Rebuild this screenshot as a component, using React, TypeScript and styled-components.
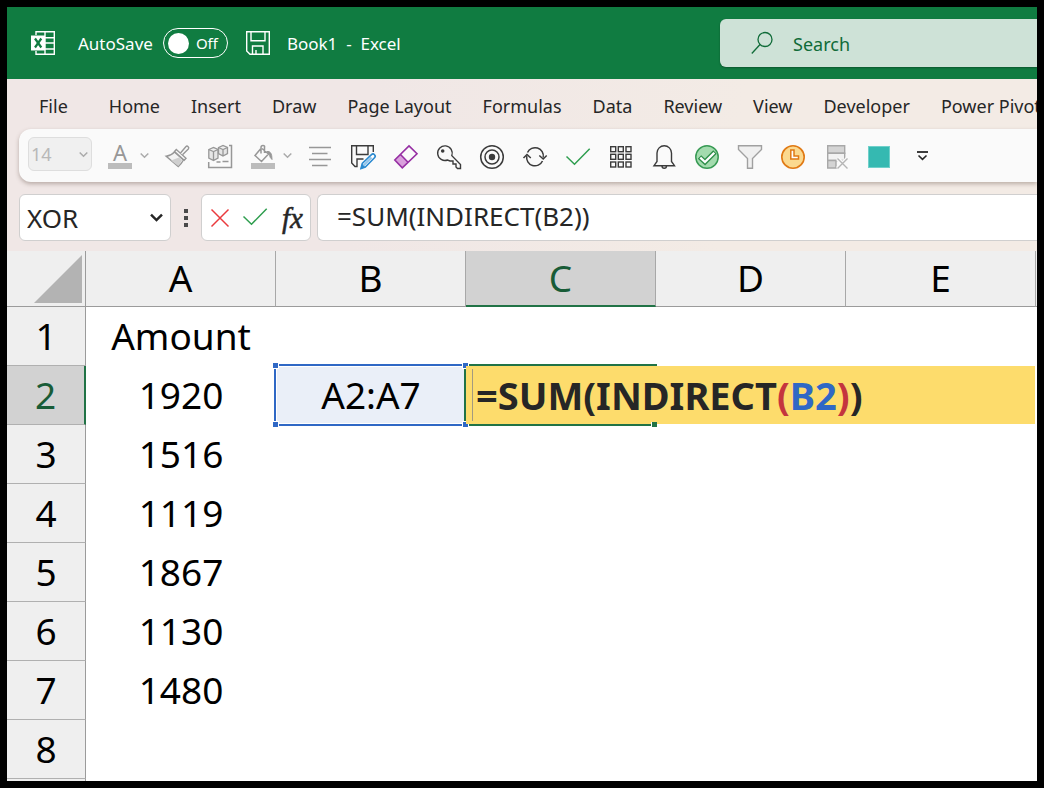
import React from "react";
import styled, { createGlobalStyle, css } from "styled-components";

const green = "#107c41";
const gridGreen = "#217346";
const rangeBlue = "#2f68c5";

const GlobalStyle = createGlobalStyle`
  *, *::before, *::after { box-sizing: border-box; }
  body {
    margin: 0;
    background: #000;
    font-family: "Noto Sans", "Open Sans", sans-serif;
  }
  button, input, select { font: inherit; color: inherit; }
`;

const Frame = styled.div`
  display: flex;
  flex-direction: column;
  height: 100vh;
  border: 7px solid #000;
  background: #fff;
  overflow: hidden;
`;

/* Title bar */

const TitleBar = styled.header`
  display: grid;
  grid-template-columns: minmax(0, 9fr) minmax(0, 4fr);
  align-items: center;
  flex: none;
  height: 72px;
  background: ${green};
  color: #fff;
  font-size: 17px;
`;

const TitleGroup = styled.div`
  display: flex;
  align-items: center;
  padding-left: 24px;
  white-space: pre;
`;

const AutoSaveLabel = styled.label`
  margin: 0 10px 0 23px;
`;

const Toggle = styled.label`
  display: flex;
  align-items: center;
  gap: 7px;
  width: 65px;
  height: 30px;
  padding-left: 4px;
  border: 1px solid #fff;
  border-radius: 15px;
  font-size: 15px;
`;

const Knob = styled.input`
  appearance: none;
  width: 21px;
  height: 21px;
  margin: 0;
  border-radius: 50%;
  background: #fff;
`;

const PlainButton = styled.button`
  display: flex;
  align-items: center;
  justify-content: center;
  padding: 0;
  border: 0;
  background: none;
`;

const SaveButton = styled(PlainButton)`
  margin: 0 17px 0 18px;
`;

const SearchBox = styled.label`
  display: flex;
  align-items: center;
  gap: 20px;
  height: 48px;
  padding-left: 31px;
  border-radius: 6px 0 0 6px;
  background: #cee2d7;
  color: #0f6b38;
  font-size: 18px;
  box-shadow: 0 1px 2px rgba(0, 0, 0, 0.3);
`;

const SearchInput = styled.input`
  flex: 1;
  min-width: 0;
  padding: 2px 0 0;
  border: 0;
  outline: 0;
  background: none;
  &::placeholder { color: inherit; opacity: 1; }
`;

/* Ribbon */

const Ribbon = styled.div`
  flex: none;
  background: linear-gradient(100deg, #f0e7e6 35%, #f3ebe5 70%);
`;

const Tabs = styled.nav`
  display: flex;
  align-items: center;
  gap: 31px;
  height: 50px;
  padding: 4px 0 0 32px;
  overflow: hidden;
`;

const Tab = styled.button`
  flex: none;
  padding: 0;
  border: 0;
  background: none;
  color: #262626;
  font-size: 18px;
  line-height: 26px;
  white-space: nowrap;
  &:first-child { margin-right: 10px; }
`;

const Toolbar = styled.div`
  display: flex;
  align-items: flex-start;
  height: 53px;
  margin-left: 12px;
  padding: 8px 0 0 9px;
  border-radius: 12px 0 0 12px;
  background: #fafafa;
  box-shadow: 0 2px 4px rgba(80, 60, 50, 0.35);
`;

const SelectWrap = styled.div<{ $small?: boolean }>`
  display: flex;
  align-items: center;
  flex: none;
  ${(p) =>
    p.$small
      ? css`
          width: 64px;
          height: 34px;
          margin-right: 7px;
          padding: 0 3px 0 2px;
          border: 1px solid #dedede;
          border-radius: 6px;
          background: #f0f0f0;
          color: #b8b8b8;
          font-size: 18px;
        `
      : css`
          width: 152px;
          height: 47px;
          padding: 0 7px;
          border: 1px solid #d0cfcf;
          border-radius: 6px;
          background: #fff;
          color: #262626;
          font-size: 26px;
        `}
`;

const Select = styled.select`
  appearance: none;
  flex: 1;
  min-width: 0;
  padding: 0;
  border: 0;
  outline: 0;
  background: none;
  opacity: 1;
`;

const Tool = styled(PlainButton)<{ $split?: boolean }>`
  flex: none;
  height: 41px;
  padding: 0 ${(p) => (p.$split ? 6 : 9)}px 0 9px;
`;

const ToolMenu = styled(PlainButton)`
  flex: none;
  height: 41px;
  padding: 0 7px 4px 1px;
`;

const FormulaRow = styled.div`
  display: flex;
  align-items: center;
  margin-left: 12px;
  padding: 12px 0 10px;
`;

const Dots = styled.span`
  display: grid;
  gap: 3px;
  margin: 0 13px;
  i { width: 4px; height: 4px; background: #4a4a4a; }
`;

const EntryButtons = styled.div`
  display: flex;
  align-items: center;
  gap: 14px;
  height: 47px;
  padding: 0 7px 0 9px;
  border: 1px solid #d0cfcf;
  border-radius: 6px;
  background: #fff;
`;

const FxButton = styled(PlainButton)`
  width: 21px;
  color: #262626;
  font: italic 29px/30px "Liberation Serif", serif;
  -webkit-text-stroke: 0.5px #262626;
`;

const FormulaInput = styled.input`
  flex: 1;
  min-width: 0;
  height: 47px;
  margin-left: 6px;
  padding: 0 0 3px 19px;
  border: 1px solid #d0cfcf;
  border-right: 0;
  border-radius: 6px 0 0 6px;
  outline: 0;
  background: #fff;
  color: #262626;
  font-size: 26px;
`;

/* Sheet */

const Sheet = styled.table`
  width: 100%;
  table-layout: fixed;
  border-collapse: separate;
  border-spacing: 0;
  color: #000;
  font-size: 37px;
  line-height: 50px;
`;

const Col = styled.col<{ $w?: number }>`
  width: ${(p) => (p.$w ? `${p.$w}px` : "auto")};
`;

const Corner = styled.td`
  height: 56px;
  padding: 0;
  border-right: 1px solid #9b9b9b;
  border-bottom: 1px solid #9b9b9b;
  background: #efefef;
  vertical-align: middle;
  svg { display: block; margin: 0 3px 0 auto; }
`;

const ColHead = styled.th<{ $active?: boolean }>`
  height: 56px;
  padding: 0 0 ${(p) => (p.$active ? 0 : 1)}px;
  border-right: 1px solid #a8a8a8;
  border-bottom: ${(p) => (p.$active ? `2px solid ${gridGreen}` : "1px solid #9b9b9b")};
  background: ${(p) => (p.$active ? "#d2d2d2" : "#efefef")};
  color: ${(p) => (p.$active ? "#185c37" : "inherit")};
  font-weight: 400;
  &:last-child { border-right: 0; }
`;

const RowHead = styled.th<{ $active?: boolean }>`
  height: 59px;
  padding: 0;
  border-right: ${(p) => (p.$active ? `2px solid ${gridGreen}` : "1px solid #9b9b9b")};
  border-bottom: 1px solid #b0b0b0;
  background: ${(p) => (p.$active ? "#d2d2d2" : "#efefef")};
  color: ${(p) => (p.$active ? "#185c37" : "inherit")};
  font-weight: 400;
`;

const Cell = styled.td`
  position: relative;
  height: 59px;
  padding: 0 0 2px;
  text-align: center;
`;

const RangeBox = styled.div`
  position: absolute;
  inset: -2px 0 -1px -2px;
  display: flex;
  align-items: center;
  justify-content: center;
  border: solid ${rangeBlue};
  border-width: 2px 0 2px 2px;
  background: #eaeff8;
  box-shadow: inset 1px 1px 0 #fff, inset 0 -1px 0 #fff;
  z-index: 1;
`;

const Handle = styled.span<{ $right?: boolean; $bottom?: boolean }>`
  position: absolute;
  width: 7px;
  height: 7px;
  border: 1px solid #fff;
  background: ${rangeBlue};
  ${(p) => (p.$right ? "right: -3px;" : "left: -4px;")}
  ${(p) => (p.$bottom ? "bottom: -4px;" : "top: -4px;")}
`;

const ActiveBox = styled.div`
  position: absolute;
  inset: -2px -1px -1px -2px;
  z-index: 2;
  border: 2px solid ${gridGreen};
  border-right: 0;
  clip-path: polygon(5px 0, 100% 0, 100% 120%, 5px 120%, 5px calc(100% - 5px), 0 calc(100% - 5px), 0 5px, 5px 5px);
  &::after {
    content: "";
    position: absolute;
    right: -1px;
    bottom: -3px;
    width: 7px;
    height: 5px;
    border-left: 1px solid #fff;
    background: ${gridGreen};
  }
`;

const Editor = styled.div`
  position: absolute;
  top: 0;
  left: 0;
  z-index: 1;
  width: 569px;
  height: 58px;
  padding: 3px 6px;
  background: #fddc6c;
`;

const Formula = styled.div`
  height: 52px;
  padding-left: 3px;
  border-left: 1px solid #a39a80;
  color: #262626;
  font-size: 38px;
  font-weight: 700;
  line-height: 52px;
  text-align: left;
  white-space: nowrap;
`;

const Token = styled.span<{ $color: string }>`
  color: ${(p) => p.$color};
`;

/* Icons */

const Svg = styled.svg.attrs({ "aria-hidden": true })`
  display: block;
  flex: none;
  fill: none;
  overflow: visible;
`;

const Icon = ({ children }: { children: React.ReactNode }) => (
  <Svg width="25" height="25" viewBox="0 0 25 25">
    {children}
  </Svg>
);

const Chevron = ({ color, w, stroke }: { color: string; w: number; stroke: number }) => (
  <Svg width={w} height={w} viewBox="0 0 9 9">
    <path d="M.7 2.5 4.5 6.3 8.3 2.5" stroke={color} strokeWidth={stroke} />
  </Svg>
);

const grey = "#979797";
const dark = "#3b3b3b";

const FontColorIcon = (
  <Icon>
    <text x="12" y="16" textAnchor="middle" fontSize="22" fill={grey}>A</text>
    <path d="M0 18h24v6H0z" fill="#bcbcbc" />
  </Icon>
);

const BrushIcon = (
  <Icon>
    <path d="M9.5 7C7 9.700 4 11 1.200 11.300L13.300 21.500C15.500 19.500 17.300 17.300 18.500 15Z" fill="#f3f3f3" stroke={grey} strokeWidth="1.400" />
    <path d="M6 15.500 14 12.500 17 15.500 13.300 21Z" fill="#cfcfcf" />
    <path d="M11.300 4.500 21 13.300 19.200 15.300 9.500 6.500Z" fill="#fafafa" stroke={grey} strokeWidth="1.400" />
    <path d="M15.500 8 20.800 1.700a1.700 1.700 0 0 1 2.500 2.300L17.500 9.800" fill="#fafafa" stroke={grey} strokeWidth="1.400" />
  </Icon>
);

const CubesIcon = (
  <Icon>
    <path d="M21 .5h2.500V22.500H.700V17M8.500 17h4M14.500 16.500h6" stroke={grey} strokeWidth="1.500" />
    <g fill="#e6e6e6" stroke={grey} strokeWidth="1.300">
      <path d="M.8 4.500 5.500 2.500 10 4.500V13L5.500 15.500.8 13ZM.8 4.500 5.500 6.500 10 4.500M5.500 6.500v9" />
      <path d="M10.500 2.500 15 .5 19.500 2.500V8.500L15 11 10.500 8.500ZM10.500 2.500 15 4.500 19.500 2.500M15 4.500V11" />
    </g>
  </Icon>
);

const BucketIcon = (
  <Icon>
    <path d="M9.500 4 4 10.500 10.500 16.500 17.500 9 11 3.500M10 8.500V2.500Q10 .5 12 .5T13.500 2.500V8" stroke={grey} strokeWidth="1.500" />
    <path d="M16 6.500Q21 5.500 21 14.500 18.500 12.500 18.500 9.500Z" fill={grey} stroke={grey} />
    <path d="M0 18h24v6H0z" fill="#bcbcbc" />
  </Icon>
);

const AlignIcon = (
  <Icon>
    <path d="M1 2.500h22M4 8.500h15.500M1 14.500h22M4 20.500h15.500" stroke={grey} strokeWidth="1.300" />
  </Icon>
);

const SaveEditIcon = (
  <Icon>
    <path d="M22.300 7V.700H.700V18L4 21.500H6V14H12.500M5.500 .7V9.500H17V.7" stroke={dark} strokeWidth="1.400" />
    <path d="M10 23.500 11.300 18.500 20.500 9.700a2 2 0 0 1 3 3L14.300 22Z" fill="#fff" stroke="#2b8ad0" strokeWidth="1.600" />
    <path d="M12.500 20.500 20.500 12.500" stroke="#8dc2ea" strokeWidth="2" />
    <path d="M9.500 24 11 19 14.500 22.300Z" fill="#2b8ad0" />
  </Icon>
);

const EraserIcon = (
  <Icon>
    <path d="M6.500 9.500.8 15 8.300 22.800 14 17.300Z" fill="#d9a0dc" />
    <path d="M15 .9 23 8.800 8.300 22.900.8 15ZM6.500 9.500l7.500 7.800" stroke="#962fa3" strokeWidth="1.600" />
  </Icon>
);

const KeyIcon = (
  <Icon>
    <path d="M14.800 10.700A7.300 7.300 0 1 0 10.500 15L13 16h3v3h3v3l1.500 1.500h3V19.500Z" stroke={dark} strokeWidth="1.400" />
    <circle cx="5.700" cy="6" r="1.800" fill={dark} />
  </Icon>
);

const TargetIcon = (
  <Icon>
    <circle cx="12" cy="12" r="11.300" stroke={dark} strokeWidth="1.500" />
    <circle cx="12" cy="12" r="7" stroke={dark} strokeWidth="1.500" />
    <circle cx="12" cy="12" r="3.200" fill={dark} />
  </Icon>
);

const RefreshIcon = (
  <Icon>
    <path d="M4.500 7.500A8.300 8.300 0 0 1 20.200 12.500M19.500 16A8.300 8.300 0 0 1 3.800 11" stroke={dark} strokeWidth="1.500" />
    <path d="M.5 13 4 9.500 7.800 13M16.300 10.500 20.200 14 23.700 10.500" stroke={dark} strokeWidth="1.500" />
  </Icon>
);

const CheckIcon = (
  <Icon>
    <path d="M.5 11.500 8.500 19.300 23.700 3.700" stroke="#2f9e4f" strokeWidth="1.500" />
  </Icon>
);

const CancelIcon = (
  <Svg width="18" height="18" viewBox="0 0 18 18">
    <path d="M.5.5l17 17M17.500.5.5 17.500" stroke="#ea3a3d" strokeWidth="1.500" />
  </Svg>
);

const GridIcon = (
  <Icon>
    {[1.7, 9.3, 17].map((y) =>
      [1.7, 9.3, 17].map((x) => (
        <rect key={`${x}-${y}`} x={x} y={y} width="5" height="5" stroke={dark} strokeWidth="1.400" />
      ))
    )}
  </Icon>
);

const BellIcon = (
  <Icon>
    <path d="M2 20.700H22.500L19.500 16.500V8A7.200 7.200 0 0 0 5 8V16.500ZM10 21a2.200 2.200 0 0 0 4.500 0" stroke={dark} strokeWidth="1.400" />
  </Icon>
);

const CheckCircleIcon = (
  <Icon>
    <circle cx="12" cy="12" r="11.200" fill="#a3dbae" stroke="#389a54" strokeWidth="1.500" />
    <path d="M4.500 12 10 17 20 7" stroke="#2f8f4a" strokeWidth="5" />
    <path d="M5.300 12.600 10 17 19.300 7.800" stroke="#fff" strokeWidth="2.300" />
  </Icon>
);

const FunnelIcon = (
  <Icon>
    <path d="M.5.700H23.500V4.500L14.500 13.500V23.300H9.500V13.500L.5 4.500Z" fill="#f0f0f0" stroke="#a0a0a0" strokeWidth="1.400" />
  </Icon>
);

const ClockIcon = (
  <Icon>
    <circle cx="12" cy="12" r="11.200" fill="#fbd98f" stroke="#e07914" strokeWidth="1.600" />
    <path d="M9.800 5H13V11H17.500V14H9.800Z" fill="#fff" stroke="#e07914" strokeWidth="1.500" />
  </Icon>
);

const DeleteRowsIcon = (
  <Icon>
    <path d="M3.700.7H20.700V8.200H3.700Z" fill="#d4d4d4" stroke="#a8a8a8" strokeWidth="1.400" />
    <path d="M3.700 8.200H20.700V15.500H3.700Z" fill="#f2f2f2" stroke="#a8a8a8" strokeWidth="1.400" />
    <path d="M3.700 15.500H12V23H3.700Z" fill="#d4d4d4" stroke="#a8a8a8" strokeWidth="1.400" />
    <path d="M13.500 13.500l10 10M23.500 13.500l-10 10" stroke="#fafafa" strokeWidth="4" />
    <path d="M13.500 13.500l10 10M23.500 13.500l-10 10" stroke="#b5b5b5" strokeWidth="1.400" />
  </Icon>
);

const SwatchIcon = (
  <Icon>
    <rect x="1.500" y="1.500" width="21" height="21" fill="#35b9b1" stroke="#6fd0ca" />
  </Icon>
);

const CustomizeIcon = (
  <Icon>
    <path d="M7 7H18" stroke="#262626" strokeWidth="1.800" />
    <path d="M8.500 10.500 12.500 14.300 16.500 10.500" stroke="#262626" strokeWidth="1.600" />
  </Icon>
);

const SaveIcon = (
  <Svg width="24" height="24" viewBox="0 0 24 24">
    <path d="M.7.7H23.300V23.300H4L.7 20ZM5 .7V9.700H19V.7M6.500 23.300V15H17V23.300M10 19v4" stroke="#fff" strokeWidth="1.400" />
  </Svg>
);

const ExcelIcon = (
  <Svg width="24" height="24" viewBox="0 0 24 24">
    <path d="M5 4V.7H23.300V23.300H5V20M14 .7V23.300M5 6.700H23.300M14 12H23.300M5 18H23.300" stroke="#fff" strokeWidth="1.400" />
    <path d="M0 4.500H14V19.500H0Z" fill="#fff" />
    <path d="M4 7.500 10.300 16.500M10.300 7.500 4 16.500" stroke={green} strokeWidth="2.200" />
  </Svg>
);

const SearchIcon = (
  <Svg width="22" height="24" viewBox="0 0 22 24">
    <circle cx="14" cy="8.500" r="7" stroke="#0f6b38" strokeWidth="1.300" />
    <path d="M9 13.500.8 22.500" stroke="#0f6b38" strokeWidth="1.300" />
  </Svg>
);

const tabs = [
  "File", "Home", "Insert", "Draw", "Page Layout", "Formulas",
  "Data", "Review", "View", "Developer", "Power Pivot",
];

const tools: { label: string; icon: React.ReactNode; menu?: boolean }[] = [
  { label: "Font Color", icon: FontColorIcon, menu: true },
  { label: "Format Painter", icon: BrushIcon },
  { label: "3D Models", icon: CubesIcon },
  { label: "Fill Color", icon: BucketIcon, menu: true },
  { label: "Center", icon: AlignIcon },
  { label: "Save As", icon: SaveEditIcon },
  { label: "Clear", icon: EraserIcon },
  { label: "Permissions", icon: KeyIcon },
  { label: "Record", icon: TargetIcon },
  { label: "Refresh", icon: RefreshIcon },
  { label: "Accept", icon: CheckIcon },
  { label: "Borders", icon: GridIcon },
  { label: "Alerts", icon: BellIcon },
  { label: "Check", icon: CheckCircleIcon },
  { label: "Filter", icon: FunnelIcon },
  { label: "Recent", icon: ClockIcon },
  { label: "Delete Rows", icon: DeleteRowsIcon },
  { label: "Color", icon: SwatchIcon },
  { label: "Customize Toolbar", icon: CustomizeIcon },
];

const columns = ["A", "B", "C", "D", "E"];
const amounts = ["Amount", "1920", "1516", "1119", "1867", "1130", "1480", ""];

export default function App() {
  return (
    <Frame>
      <GlobalStyle />
      <TitleBar>
        <TitleGroup>
          {ExcelIcon}
          <AutoSaveLabel htmlFor="autosave">AutoSave</AutoSaveLabel>
          <Toggle>
            <Knob id="autosave" type="checkbox" role="switch" />
            Off
          </Toggle>
          <SaveButton aria-label="Save">{SaveIcon}</SaveButton>
          <span>{"Book1  -  Excel"}</span>
        </TitleGroup>
        <SearchBox>
          {SearchIcon}
          <SearchInput type="text" placeholder="Search" aria-label="Search" />
        </SearchBox>
      </TitleBar>

      <Ribbon>
        <Tabs>
          {tabs.map((t) => (
            <Tab key={t}>{t}</Tab>
          ))}
        </Tabs>
        <Toolbar>
          <SelectWrap $small>
            <Select aria-label="Font size" disabled defaultValue="14">
              <option>14</option>
            </Select>
            <Chevron color="#ababab" w={9} stroke={1.5} />
          </SelectWrap>
          {tools.map((t) => (
            <React.Fragment key={t.label}>
              <Tool aria-label={t.label} $split={t.menu}>{t.icon}</Tool>
              {t.menu && (
                <ToolMenu aria-label={`${t.label} options`}>
                  <Chevron color="#ababab" w={9} stroke={1.5} />
                </ToolMenu>
              )}
            </React.Fragment>
          ))}
        </Toolbar>
        <FormulaRow>
          <SelectWrap>
            <Select aria-label="Name box" defaultValue="XOR">
              <option>XOR</option>
            </Select>
            <Chevron color="#262626" w={13} stroke={1.7} />
          </SelectWrap>
          <Dots><i /><i /><i /></Dots>
          <EntryButtons>
            <PlainButton aria-label="Cancel">{CancelIcon}</PlainButton>
            <PlainButton aria-label="Enter">{CheckIcon}</PlainButton>
            <FxButton aria-label="Insert function">fx</FxButton>
          </EntryButtons>
          <FormulaInput type="text" aria-label="Formula bar" defaultValue="=SUM(INDIRECT(B2))" />
        </FormulaRow>
      </Ribbon>

      <Sheet>
        <colgroup>
          <Col $w={79} />
          {columns.map((c) => (
            <Col key={c} $w={190} />
          ))}
          <Col />
        </colgroup>
        <thead>
          <tr>
            <Corner>
              <Svg width="48" height="48" viewBox="0 0 48 48">
                <path d="M48 0V48H0Z" fill="#b3b3b3" />
              </Svg>
            </Corner>
            {columns.map((c) => (
              <ColHead key={c} scope="col" $active={c === "C"}>{c}</ColHead>
            ))}
            <ColHead aria-hidden />
          </tr>
        </thead>
        <tbody>
          {amounts.map((amount, i) => (
            <tr key={i}>
              <RowHead scope="row" $active={i === 1}>{i + 1}</RowHead>
              <Cell>{amount}</Cell>
              <Cell>
                {i === 1 && (
                  <RangeBox>
                    A2:A7
                    <Handle />
                    <Handle $right />
                    <Handle $bottom />
                    <Handle $right $bottom />
                  </RangeBox>
                )}
              </Cell>
              <Cell>
                {i === 1 && (
                  <>
                    <Editor>
                      <Formula>
                        =SUM(INDIRECT<Token $color="#c4353e">(</Token>
                        <Token $color="#2f68c5">B2</Token>
                        <Token $color="#c4353e">)</Token>)
                      </Formula>
                    </Editor>
                    <ActiveBox />
                  </>
                )}
              </Cell>
              <Cell />
              <Cell />
              <Cell />
            </tr>
          ))}
          <tr>
            <RowHead aria-hidden />
          </tr>
        </tbody>
      </Sheet>
    </Frame>
  );
}
